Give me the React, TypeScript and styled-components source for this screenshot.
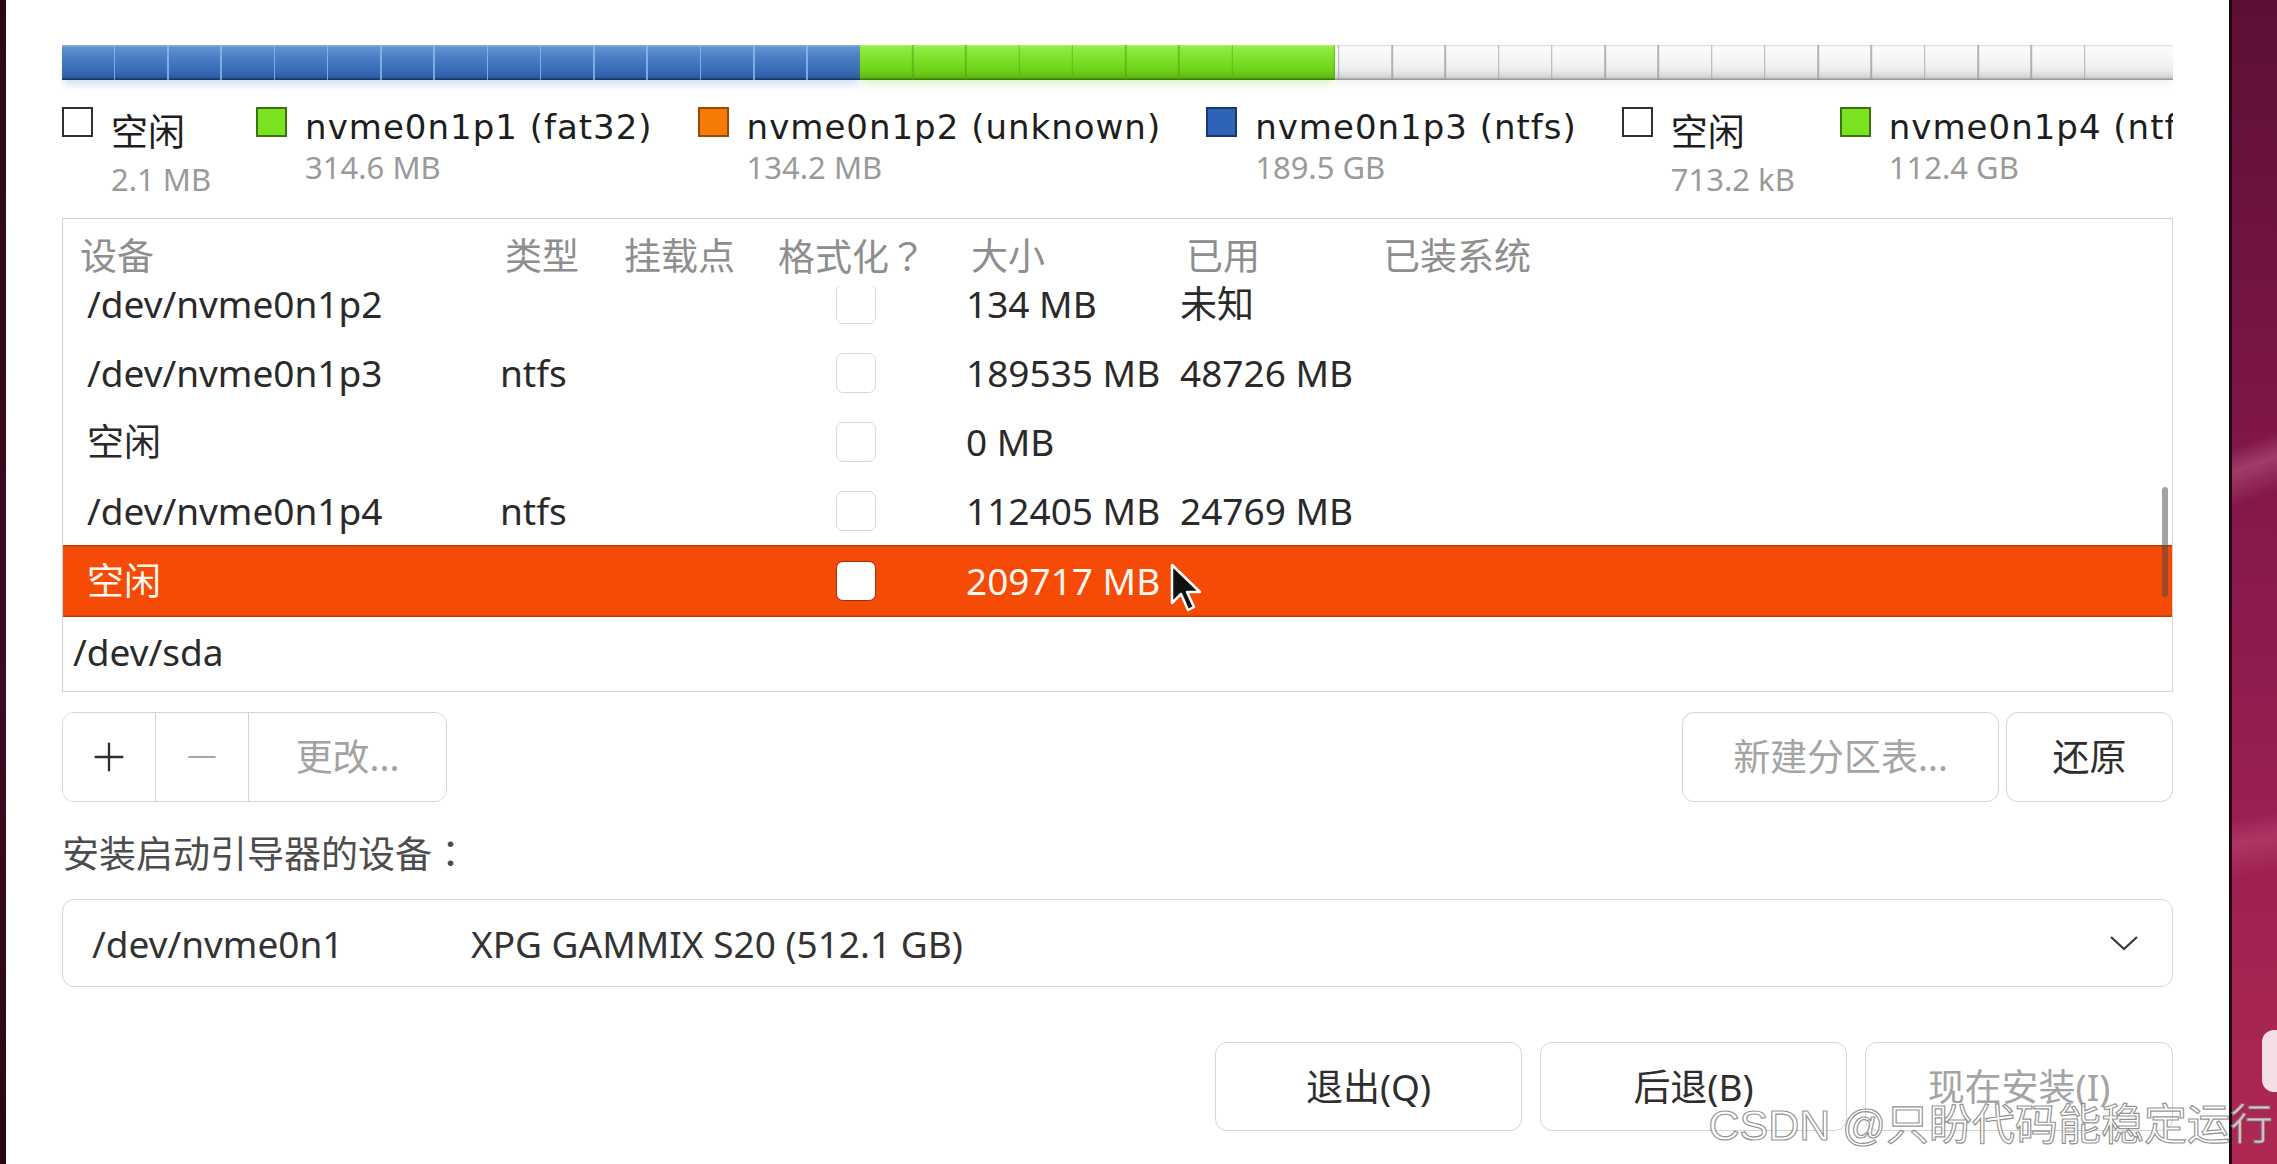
import React, { useLayoutEffect, useRef } from 'react'
import styled, { createGlobalStyle, css } from 'styled-components'
import { Minus, Plus } from 'lucide-react'

const GlobalStyle = createGlobalStyle`
  html, body {
    margin: 0;
    padding: 0;
    background: #ffffff;
  }
  body {
    width: 2277px;
    height: 1164px;
    overflow: hidden;
    font-family: 'Noto Sans', 'Noto Sans CJK SC', sans-serif;
  }
`

const CELL = 53.27
const COLUMNS = '429px 114px 154px 198px 209px 203px 1fr'

type Tone = 'blue' | 'green' | 'free'

const tones: Record<Tone, { body: string; line: string; glow: string }> = {
  blue: {
    body: 'linear-gradient(180deg, #8db3e4 0, #6395d3 2px, #4a7ec4 35%, #3a6db6 70%, #2f5ea4 92%, #0f2b5c 100%)',
    line: 'rgba(150, 190, 240, 0.75)',
    glow: 'rgba(70, 120, 190, 0.22)',
  },
  green: {
    body: 'linear-gradient(180deg, #b4f56e 0, #93ec45 2px, #80e22c 35%, #70d31b 70%, #5fbd12 92%, #2f6c08 100%)',
    line: 'rgba(80, 160, 20, 0.55)',
    glow: 'rgba(110, 210, 40, 0.22)',
  },
  free: {
    body: 'linear-gradient(180deg, #d8d8d8 0, #fbfbfb 2px, #f6f6f6 40%, #ececec 72%, #d4d4d4 92%, #8d8d8d 100%)',
    line: 'rgba(150, 150, 150, 0.7)',
    glow: 'rgba(0, 0, 0, 0.05)',
  },
}

const Screen = styled.div`
  position: relative;
  display: flex;
  width: 2277px;
  height: 1164px;
  overflow: hidden;
`

const DesktopEdge = styled.div`
  width: 6px;
  flex-shrink: 0;
  background: linear-gradient(180deg, #2c0817, #3b0c22 60%, #2a0714);
`

const Window = styled.main`
  flex: 1;
  min-width: 0;
  display: flex;
  flex-direction: column;
  padding: 45px 56px 0;
  background: #ffffff;
`

const Wallpaper = styled.aside`
  position: relative;
  width: 45px;
  flex-shrink: 0;
  border-left: 3px solid #1f0510;
  background:
    linear-gradient(160deg, transparent 38%, rgba(255, 170, 200, 0.25) 40%, transparent 43%),
    linear-gradient(170deg, transparent 70%, rgba(255, 150, 190, 0.18) 72%, transparent 75%),
    linear-gradient(180deg, #5c0f35 0%, #731442 25%, #8a194d 50%, #9e2151 75%, #ae2852 100%);
`

const Notice = styled.div`
  position: absolute;
  top: 1030px;
  left: 30px;
  width: 30px;
  height: 62px;
  border-radius: 12px;
  background: #f3dde6;
`

/* partition bar */

const Bar = styled.div`
  display: flex;
  height: 35px;
  flex-shrink: 0;
`

const Segment = styled.div<{ $tone: Tone; $grow: number; $offset: number }>`
  flex: ${({ $grow }) => $grow} 1 0;
  background-image:
    repeating-linear-gradient(
      90deg,
      transparent 0,
      transparent ${CELL - 1.5}px,
      ${({ $tone }) => tones[$tone].line} ${CELL - 1.5}px,
      ${({ $tone }) => tones[$tone].line} ${CELL}px
    ),
    ${({ $tone }) => tones[$tone].body};
  background-position: ${({ $offset }) => -$offset}px 0, 0 0;
  box-shadow: 0 7px 7px -2px ${({ $tone }) => tones[$tone].glow};
`

/* legend */

const Legend = styled.div`
  display: flex;
  gap: 45px;
  height: 94px;
  margin-top: 27px;
  overflow: hidden;
  white-space: nowrap;
  flex-shrink: 0;
`

const LegendItem = styled.div`
  display: flex;
  align-items: flex-start;
  gap: 18px;
  flex-shrink: 0;
`

const Swatch = styled.span<{ $fill: string; $edge: string }>`
  width: 31px;
  height: 30px;
  box-sizing: border-box;
  flex-shrink: 0;
  border: 2px solid ${({ $edge }) => $edge};
  background: ${({ $fill }) => $fill};
`

const LegendName = styled.div<{ $cjk?: boolean }>`
  font-family: 'DejaVu Sans', 'Noto Sans CJK SC', sans-serif;
  font-size: ${({ $cjk }) => ($cjk ? 37 : 34)}px;
  letter-spacing: ${({ $cjk }) => ($cjk ? 0 : 1)}px;
  line-height: 40px;
  padding-top: ${({ $cjk }) => ($cjk ? 7 : 0)}px;
  color: #1e1e1e;
`

const LegendSize = styled.div<{ $cjk?: boolean }>`
  font-size: 31px;
  line-height: 36px;
  margin-top: ${({ $cjk }) => ($cjk ? 7 : 2)}px;
  color: #9a9a9a;
`

/* partition list */

const ListBox = styled.section`
  position: relative;
  display: flex;
  flex-direction: column;
  height: 474px;
  margin-top: 17px;
  box-sizing: border-box;
  border: 1.5px solid #d2d2d2;
  flex-shrink: 0;
`

const HeaderRow = styled.div`
  display: grid;
  grid-template-columns: ${COLUMNS};
  align-items: center;
  height: 67px;
  box-sizing: border-box;
  padding-top: 6px;
  flex-shrink: 0;
  font-size: 37px;
  line-height: 44px;
  color: #8e8e8e;
`

const Viewport = styled.div`
  flex: 1;
  overflow: hidden;
`

const Row = styled.div<{ $selected?: boolean }>`
  display: grid;
  grid-template-columns: ${COLUMNS};
  align-items: center;
  height: 69px;
  font-size: 37px;
  line-height: 44px;
  color: #2a2a2a;

  ${({ $selected }) =>
    $selected &&
    css`
      height: 72px;
      background: #f54b06;
      color: #fff7f0;
      box-shadow: inset 0 1.5px 0 #c53c02, inset 0 -1.5px 0 #c53c02;
    `}
`

const Cell = styled.div<{ $indent?: number }>`
  padding-left: ${({ $indent }) => $indent ?? 13}px;
  white-space: nowrap;
`

/* full-width punctuation centred in its em box, as the installer draws it */
const Punct = styled.span`
  font-family: 'Noto Sans CJK TC', 'Noto Sans CJK SC', sans-serif;
`

const Check = styled.span<{ $on?: boolean }>`
  display: block;
  width: 40px;
  height: 40px;
  margin-left: 63px;
  box-sizing: border-box;
  border-radius: 7px;
  border: 1.5px solid ${({ $on }) => ($on ? '#9a3204' : '#d8d8d8')};
  background: #ffffff;
`

const ScrollThumb = styled.div`
  position: absolute;
  top: 268px;
  right: 4px;
  width: 6px;
  height: 110px;
  border-radius: 3px;
  background: rgba(70, 70, 70, 0.5);
`

/* buttons */

const ActionRow = styled.div`
  display: flex;
  justify-content: space-between;
  height: 90px;
  margin-top: 20px;
  flex-shrink: 0;
`

const ButtonGroup = styled.div`
  display: flex;
  border: 1.5px solid #d4d4d4;
  border-radius: 12px;
  overflow: hidden;
`

const GroupButton = styled.button<{ $width: number; $dim?: boolean }>`
  display: flex;
  align-items: center;
  justify-content: center;
  width: ${({ $width }) => $width}px;
  border: none;
  padding: 0;
  background: #ffffff;
  font-family: inherit;
  font-size: 37px;
  line-height: 44px;
  color: ${({ $dim }) => ($dim ? '#a2a2a2' : '#2e2e2e')};

  & + & {
    border-left: 1.5px solid #d4d4d4;
  }
`

const ButtonPair = styled.div`
  display: flex;
  gap: 7px;
`

const Button = styled.button<{ $width: number; $dim?: boolean }>`
  width: ${({ $width }) => $width}px;
  height: 100%;
  padding: 0;
  box-sizing: border-box;
  border: 1.5px solid #d4d4d4;
  border-radius: 12px;
  background: #ffffff;
  font-family: inherit;
  font-size: 37px;
  line-height: 44px;
  color: ${({ $dim }) => ($dim ? '#a4a4a4' : '#2e2e2e')};
`

const FieldLabel = styled.div`
  margin-top: 28px;
  font-size: 37px;
  line-height: 44px;
  color: #4c4c4c;
`

const Combo = styled.div`
  display: flex;
  align-items: center;
  height: 88px;
  margin-top: 23px;
  padding: 0 33px 0 29px;
  box-sizing: border-box;
  border: 1.5px solid #d6d6d6;
  border-radius: 12px;
  font-size: 37px;
  color: #333333;
  flex-shrink: 0;
`

const ComboDevice = styled.span`
  width: 379px;
  flex-shrink: 0;
`

const ComboModel = styled.span`
  flex: 1;
`

const Footer = styled.div`
  display: flex;
  justify-content: flex-end;
  gap: 18px;
  height: 89px;
  margin-top: 55px;
  flex-shrink: 0;
`

/* overlays */

const Pointer = styled.svg`
  position: absolute;
  left: 1170px;
  top: 563px;
`

const Watermark = styled.div`
  position: absolute;
  right: 4px;
  bottom: 17px;
  font-family: 'Liberation Sans', 'Noto Sans CJK SC', sans-serif;
  font-size: 43px;
  line-height: 43px;
  color: rgba(255, 255, 255, 0.72);
  -webkit-text-stroke: 1.2px rgba(110, 110, 110, 0.75);
  white-space: nowrap;
`

const segments: { tone: Tone; grow: number }[] = [
  { tone: 'blue', grow: 799 },
  { tone: 'green', grow: 475 },
  { tone: 'free', grow: 839 },
]

const legend = [
  { name: '空闲', size: '2.1 MB', fill: '#ffffff', edge: '#2f2f2f', cjk: true },
  { name: 'nvme0n1p1 (fat32)', size: '314.6 MB', fill: '#79e320', edge: '#3f7214' },
  { name: 'nvme0n1p2 (unknown)', size: '134.2 MB', fill: '#f57a08', edge: '#9a4a06' },
  { name: 'nvme0n1p3 (ntfs)', size: '189.5 GB', fill: '#2f63b6', edge: '#163873' },
  { name: '空闲', size: '713.2 kB', fill: '#ffffff', edge: '#2f2f2f', cjk: true },
  { name: 'nvme0n1p4 (ntfs)', size: '112.4 GB', fill: '#79e320', edge: '#3f7214' },
]

const headers: { label: React.ReactNode; indent: number }[] = [
  { label: '设备', indent: 17 },
  { label: '类型', indent: 13 },
  { label: '挂载点', indent: 18 },
  {
    label: (
      <>
        格式化<Punct>？</Punct>
      </>
    ),
    indent: 18,
  },
  { label: '大小', indent: 13 },
  { label: '已用', indent: 19 },
  { label: '已装系统', indent: 13 },
]

type Part = {
  device: string
  type?: string
  format?: boolean
  size?: string
  used?: string
  selected?: boolean
  parent?: boolean
}

const parts: Part[] = [
  { device: '/dev/nvme0n1p2', format: true, size: '134 MB', used: '未知' },
  { device: '/dev/nvme0n1p3', type: 'ntfs', format: true, size: '189535 MB', used: '48726 MB' },
  { device: '空闲', format: true, size: '0 MB' },
  { device: '/dev/nvme0n1p4', type: 'ntfs', format: true, size: '112405 MB', used: '24769 MB' },
  { device: '空闲', format: true, size: '209717 MB', selected: true },
  { device: '/dev/sda', parent: true },
  { device: '/dev/sda1', type: 'ntfs', format: true, size: '512108 MB' },
]

function PartitionBar() {
  let start = 0
  return (
    <Bar>
      {segments.map((s) => {
        const offset = start % CELL
        start += s.grow
        return <Segment key={s.tone} $tone={s.tone} $grow={s.grow} $offset={offset} />
      })}
    </Bar>
  )
}

function PartitionList() {
  const viewport = useRef<HTMLDivElement>(null)

  useLayoutEffect(() => {
    if (viewport.current) viewport.current.scrollTop = 17
  }, [])

  return (
    <ListBox>
      <HeaderRow>
        {headers.map((h, i) => (
          <Cell key={i} $indent={h.indent}>
            {h.label}
          </Cell>
        ))}
      </HeaderRow>
      <Viewport ref={viewport}>
        {parts.map((p, i) => (
          <Row key={i} $selected={p.selected}>
            <Cell $indent={p.parent ? 10 : 24}>{p.device}</Cell>
            <Cell $indent={8}>{p.type}</Cell>
            <Cell />
            <Cell>{p.format && <Check $on={p.selected} />}</Cell>
            <Cell $indent={8}>{p.size}</Cell>
            <Cell>{p.used}</Cell>
            <Cell />
          </Row>
        ))}
      </Viewport>
      <ScrollThumb />
    </ListBox>
  )
}

export default function App() {
  return (
    <Screen>
      <GlobalStyle />
      <DesktopEdge />
      <Window>
        <PartitionBar />
        <Legend>
          {legend.map((l, i) => (
            <LegendItem key={i}>
              <Swatch $fill={l.fill} $edge={l.edge} />
              <div>
                <LegendName $cjk={l.cjk}>{l.name}</LegendName>
                <LegendSize $cjk={l.cjk}>{l.size}</LegendSize>
              </div>
            </LegendItem>
          ))}
        </Legend>

        <PartitionList />

        <ActionRow>
          <ButtonGroup>
            <GroupButton $width={92} aria-label="添加">
              <Plus size={46} strokeWidth={1.2} color="#2e2e2e" />
            </GroupButton>
            <GroupButton $width={93} aria-label="删除">
              <Minus size={44} strokeWidth={1.2} color="#a6a6a6" />
            </GroupButton>
            <GroupButton $width={198} $dim>更改...</GroupButton>
          </ButtonGroup>
          <ButtonPair>
            <Button $width={317} $dim>新建分区表...</Button>
            <Button $width={167}>还原</Button>
          </ButtonPair>
        </ActionRow>

        <FieldLabel>
          安装启动引导器的设备<Punct>：</Punct>
        </FieldLabel>
        <Combo>
          <ComboDevice>/dev/nvme0n1</ComboDevice>
          <ComboModel>XPG GAMMIX S20 (512.1 GB)</ComboModel>
          <svg width="30" height="16" viewBox="0 0 30 16" fill="none">
            <path d="M2 2 L15 14 L28 2" stroke="#3a3a3a" strokeWidth="2.2" />
          </svg>
        </Combo>

        <Footer>
          <Button $width={307}>退出(Q)</Button>
          <Button $width={307}>后退(B)</Button>
          <Button $width={308} $dim>现在安装(I)</Button>
        </Footer>
      </Window>
      <Wallpaper>
        <Notice />
      </Wallpaper>

      <Pointer width="34" height="52" viewBox="0 0 34 52">
        <path
          d="M2 2 L2 40 L11 31 L18 47 L24 44 L17 29 L30 29 Z"
          fill="#111111"
          stroke="#ffffff"
          strokeWidth="2.5"
          strokeLinejoin="round"
        />
      </Pointer>
      <Watermark>CSDN @只盼代码能稳定运行</Watermark>
    </Screen>
  )
}
